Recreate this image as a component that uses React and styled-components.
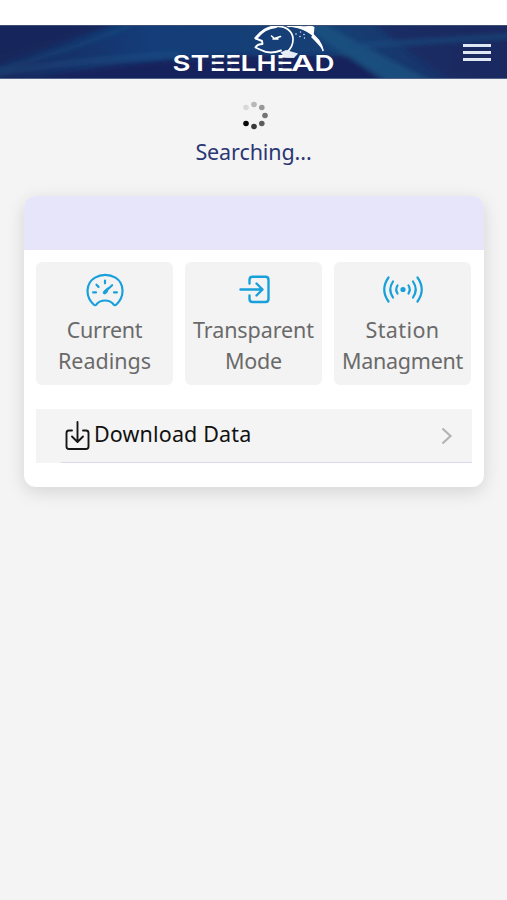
import React from "react";
import styled, { createGlobalStyle } from "styled-components";

const GlobalStyle = createGlobalStyle`
  * {
    box-sizing: border-box;
  }
  body {
    margin: 0;
    background: #f4f4f4;
    font-family: "Noto Sans", "Open Sans", sans-serif;
  }
`;

const Page = styled.div`
  min-height: 900px;
  background: #f4f4f4;
`;

// white strip behind the phone status bar
const StatusBar = styled.div`
  height: 25px;
  background: #fff;
`;

const Header = styled.header`
  position: relative;
  display: flex;
  justify-content: center;
  height: 54px;
  overflow: hidden;
  background: #17295f;
  border-top: 1px solid #3b506f;
  border-bottom: 1px solid #50648c;
`;

const HeaderArt = styled.svg`
  position: absolute;
  inset: 0;
  width: 100%;
  height: 100%;
`;

const Logo = styled.svg`
  position: relative;
  width: 167px;
  height: 54px;
  margin-top: -1px;
`;

const MenuButton = styled.button`
  position: absolute;
  top: 18px;
  right: 16px;
  display: flex;
  flex-direction: column;
  justify-content: space-between;
  width: 28px;
  height: 17px;
  padding: 0;
  border: none;
  background: transparent;
  cursor: pointer;
`;

const MenuLine = styled.span`
  height: 3px;
  background: #dfe7f5;
`;

const Status = styled.div`
  display: flex;
  flex-direction: column;
  align-items: center;
  height: 117px;
  padding-top: 22px;
`;

const StatusText = styled.div`
  margin-top: 7px;
  color: #2b3674;
  font-size: 21.5px;
  line-height: 30px;
  letter-spacing: ${(props) => props.$spacing}px;
`;

const Card = styled.section`
  width: 460px;
  height: 291px;
  margin: 0 auto 0 24px;
  overflow: hidden;
  background: #fff;
  border-radius: 12px;
  box-shadow: 0 5px 18px rgba(0, 0, 0, 0.13);
`;

const CardHeader = styled.div`
  height: 54px;
  background: #e6e5fa;
`;

const Tiles = styled.div`
  display: grid;
  grid-template-columns: repeat(3, 137px);
  gap: 12px;
  padding: 12px 12px 0;
`;

const TileButton = styled.button`
  display: flex;
  flex-direction: column;
  align-items: center;
  height: 123px;
  padding: 9px 0 0;
  border: none;
  border-radius: 6px;
  background: #f3f3f3;
  color: #6a6a6a;
  font-family: inherit;
  font-size: 21.5px;
  line-height: 31px;
  cursor: pointer;
  svg {
    flex: none;
    margin-bottom: 5px;
  }
`;

const TileLine = styled.span`
  white-space: nowrap;
  letter-spacing: ${(props) => props.$spacing}px;
`;

const DownloadRow = styled.div`
  display: flex;
  align-items: center;
  height: 54px;
  margin: 24px 12px 0;
  padding: 0 17px 0 28px;
  background: linear-gradient(#d9d9ec, #d9d9ec) 25px 100% / 100% 1.5px no-repeat #f4f4f4;
`;

const DownloadLabel = styled.span`
  flex: 1;
  margin: -5px 0 0 4px;
  color: #111;
  font-size: 21.5px;
  line-height: 30px;
  letter-spacing: ${(props) => props.$spacing}px;
`;

const Waves = () => (
  <HeaderArt viewBox="0 0 507 52" preserveAspectRatio="none">
    <defs>
      <linearGradient id="sea" x1="0" x2="1" y1="0" y2="0">
        <stop offset="0" stopColor="#18275c" />
        <stop offset="0.3" stopColor="#143d79" />
        <stop offset="0.65" stopColor="#164075" />
        <stop offset="1" stopColor="#192b63" />
      </linearGradient>
      <filter id="soft" x="-10%" y="-30%" width="120%" height="160%">
        <feGaussianBlur stdDeviation="2.5" />
      </filter>
    </defs>
    <rect width="507" height="52" fill="url(#sea)" />
    <g filter="url(#soft)">
      <path d="M-10 -8H130Q70 14 -10 38Z" fill="#17265b" />
      <path d="M0 60Q110 34 240 30H350L390 60Z" fill="#18235b" />
      <path d="M-5 44Q60 28 130 0" stroke="#1b5285" strokeWidth="4" fill="none" opacity="0.5" />
      <path d="M-5 48Q70 34 180 28" stroke="#1b5788" strokeWidth="4" fill="none" opacity="0.55" />
      <path d="M320 -5Q365 22 435 56H390Q345 32 305 0Z" fill="#1b5483" opacity="0.75" />
      <path d="M374 -4Q395 18 455 56H520V-4Z" fill="#18285f" opacity="0.75" />
      <path d="M345 20Q420 16 510 10" stroke="#1a4c80" strokeWidth="4" fill="none" opacity="0.8" />
    </g>
  </HeaderArt>
);

// [letter, x, width]
const logoLetters = [
  ["S", 172.5, 18],
  ["T", 190.5, 19],
  ["E", 210, 15.5],
  ["E", 225.5, 15.5],
  ["L", 240.5, 16],
  ["H", 256.5, 20],
  ["E", 276.5, 17],
  ["A", 291, 23.5],
  ["D", 314.5, 20],
];

const SteelheadLogo = () => (
  <Logo viewBox="170 25 167 54">
    {/* fish */}
    <g fill="none" stroke="#fff" strokeLinecap="round" strokeLinejoin="round">
      <path d="M255.500 38.300L262 41L262.500 44C259 44 256.500 45.500 255.500 47.500L261 50C266 52.800 274 53 281 50.500" strokeWidth="1.900" />
      <path d="M256 38C262 31 267 27.500 276 26.500" strokeWidth="2.800" />
      <path d="M276 26.500C286 25.500 292.500 31.500 293 38.500C293.300 44 291 48.500 287 52" strokeWidth="1.700" />
      <path d="M288 26.500C302 25 320 35 323 50.500" strokeWidth="1.500" />
      <path d="M271.500 36L274.500 38.500L280.500 36.500M273 39H278" strokeWidth="1.600" />
    </g>
    <path d="M285 26C296 25.500 305 27 311 25.500L314.500 27L313.500 37C308 31 299 27.500 285 26Z" fill="#fff" />
    <path d="M313 35C319 40 322.500 45 323.500 51C319 45 315 41 311 37Z" fill="#fff" />
    <g fill="#dfe9f7">
      <circle cx="296" cy="34" r=".8" />
      <circle cx="300" cy="36.500" r=".8" />
      <circle cx="304" cy="34.500" r=".8" />
      <circle cx="300.500" cy="32" r=".7" />
      <circle cx="304.500" cy="38" r=".7" />
    </g>
    <g fill="#fff" fontFamily="Inter, sans-serif" fontSize="22" fontWeight="600">
      {logoLetters.map(([letter, x, width]) => (
        <text key={x} x={x} y="71" textLength={width} lengthAdjust="spacingAndGlyphs">
          {letter}
        </text>
      ))}
    </g>
    {/* gaps that split each E into three bars */}
    <g fill="#18285f">
      <path d="M210.500 58.200h5.500v3.200h-5.500zM210.500 64.300h5.500v3.600h-5.500z" />
      <path d="M226 58.200h5.500v3.200h-5.500zM226 64.300h5.500v3.600h-5.500z" />
      <path d="M277 58.200h5.800v3.200h-5.800zM277 64.300h5.800v3.600h-5.800z" />
    </g>
    {/* fin */}
    <path d="M280.500 52.500L286 50L298 53.500L294 58L285 57.500Z" fill="#e7edf6" />
  </Logo>
);

const spinnerDots = [
  [12, 2.5, "#b8b8b8"],
  [19.8, 5.5, "#989898"],
  [23, 13.5, "#747474"],
  [19.8, 21.5, "#5c5c5c"],
  [12, 24.5, "#383838"],
  [4, 21.5, "#080808"],
  [4, 5.5, "#d8d8d8"],
];

const Spinner = () => (
  <svg width="28" height="29" viewBox="-2 -1 28 29">
    {spinnerDots.map(([x, y, fill]) => (
      <circle key={fill} cx={x} cy={y} r="2.8" fill={fill} />
    ))}
  </svg>
);

const GaugeIcon = () => (
  <svg width="38" height="38" viewBox="0 0 40 38" fill="none" stroke="#18a0da" strokeWidth="2.300" strokeLinecap="round" strokeLinejoin="round">
    <path d="M8.300 34.500C-1.500 25.500 0 11.500 9.500 6C16 2.200 24.500 2.200 31 6C40 11.500 41.500 25.500 31.800 34.500C30.500 35.500 29.500 35 28.700 33.800C24.500 28.800 15.500 28.800 11.300 33.800C10.500 35 9.500 35.500 8.300 34.500Z" />
    <path d="M7.500 21.500H10.500M29.500 21.500H32.500M11 13.500L13.200 15.700M20 9V12" />
    <path d="M27.500 14L20 21" />
    <path d="M22.500 17L18.500 20.500C17 23.500 20.500 24.500 22.500 21Z" fill="#18a0da" strokeWidth="1" />
  </svg>
);

const EnterIcon = () => (
  <svg width="40" height="38" viewBox="0 0 40 38" fill="none" stroke="#18a0da" strokeWidth="2.400" strokeLinecap="round" strokeLinejoin="round">
    <path d="M15.500 12.500V9Q15.500 5.800 18.500 5.800H31.500Q34.500 5.800 34.500 9V28Q34.500 31 31.500 31H18.500Q15.500 31 15.500 28V24.500" />
    <path d="M6.500 18.500H28.500M22.500 12.500L28.500 18.500L22.500 24.500" />
  </svg>
);

const SignalIcon = () => (
  <svg width="44" height="38" viewBox="0 0 44 38" fill="none" stroke="#18a0da" strokeWidth="2.200" strokeLinecap="round">
    <circle cx="22" cy="18.500" r="2.600" fill="#18a0da" stroke="none" />
    <path d="M16.500 14.500Q14 18.500 16.500 22.500M27.500 14.500Q30 18.500 27.500 22.500" />
    <path d="M12 10.500Q6.500 18.500 12 26.500M32 10.500Q37.500 18.500 32 26.500" />
    <path d="M7.500 6.500Q-1 18.500 7.500 30.500M36.500 6.500Q45 18.500 36.500 30.500" />
  </svg>
);

const DownloadIcon = () => (
  <svg width="26" height="32" viewBox="0 0 26 32" fill="none" stroke="#161616" strokeWidth="1.900" strokeLinecap="round" strokeLinejoin="round">
    <path d="M8 10.500H5Q2.500 10.500 2.500 13V26.500Q2.500 29 5 29H22Q24.500 29 24.500 26.500V13Q24.500 10.500 22 10.500H19" />
    <path d="M13.500 2V21.500M8 16.500L13.500 22L19 16.500" />
  </svg>
);

const ChevronIcon = () => (
  <svg width="16" height="18" viewBox="0 0 16 18" fill="none" stroke="#b3b3b3" strokeWidth="2.200">
    <path d="M3.500 1.500L11.500 9L3.500 16.500" />
  </svg>
);

const tiles = [
  { icon: <GaugeIcon />, lines: [["Current", -0.25], ["Readings", 0]] },
  { icon: <EnterIcon />, lines: [["Transparent", -0.1], ["Mode", -0.2]] },
  { icon: <SignalIcon />, lines: [["Station", 0.4], ["Managment", -0.25]] },
];

const App = () => {
  return (
    <Page>
      <GlobalStyle />
      <StatusBar />
      <Header>
        <Waves />
        <SteelheadLogo />
        <MenuButton aria-label="Menu">
          <MenuLine />
          <MenuLine />
          <MenuLine />
        </MenuButton>
      </Header>
      <Status>
        <Spinner />
        <StatusText $spacing={-0.1}>Searching...</StatusText>
      </Status>
      <Card>
        <CardHeader />
        <Tiles>
          {tiles.map(({ icon, lines }) => (
            <TileButton key={lines[0][0]}>
              {icon}
              {lines.map(([text, spacing]) => (
                <TileLine key={text} $spacing={spacing}>
                  {text}
                </TileLine>
              ))}
            </TileButton>
          ))}
        </Tiles>
        <DownloadRow>
          <DownloadIcon />
          <DownloadLabel $spacing={0.15}>Download Data</DownloadLabel>
          <ChevronIcon />
        </DownloadRow>
      </Card>
    </Page>
  );
};

export default App;
